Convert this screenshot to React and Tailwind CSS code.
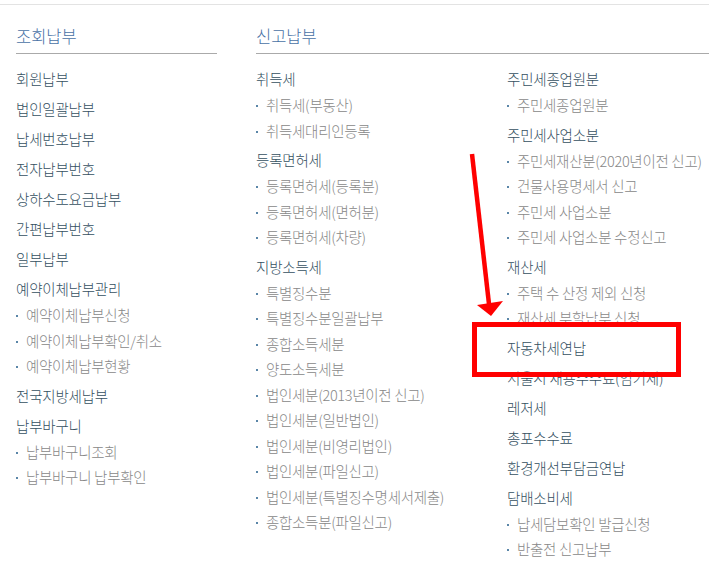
import React from "react";

const col1 = [
  { h: "회원납부" },
  { h: "법인일괄납부" },
  { h: "납세번호납부" },
  { h: "전자납부번호" },
  { h: "상하수도요금납부" },
  { h: "간편납부번호" },
  { h: "일부납부" },
  { h: "예약이체납부관리", s: ["예약이체납부신청", "예약이체납부확인/취소", "예약이체납부현황"] },
  { h: "전국지방세납부" },
  { h: "납부바구니", s: ["납부바구니조회", "납부바구니 납부확인"] },
];

const col2 = [
  { h: "취득세", s: ["취득세(부동산)", "취득세대리인등록"] },
  { h: "등록면허세", s: ["등록면허세(등록분)", "등록면허세(면허분)", "등록면허세(차량)"] },
  {
    h: "지방소득세",
    s: [
      "특별징수분",
      "특별징수분일괄납부",
      "종합소득세분",
      "양도소득세분",
      "법인세분(2013년이전 신고)",
      "법인세분(일반법인)",
      "법인세분(비영리법인)",
      "법인세분(파일신고)",
      "법인세분(특별징수명세서제출)",
      "종합소득분(파일신고)",
    ],
  },
];

const col3 = [
  { h: "주민세종업원분", s: ["주민세종업원분"] },
  {
    h: "주민세사업소분",
    s: ["주민세재산분(2020년이전 신고)", "건물사용명세서 신고", "주민세 사업소분", "주민세 사업소분 수정신고"],
  },
  { h: "재산세", s: ["주택 수 산정 제외 신청", "재산세 부할납부 신청"] },
  { h: "자동차세연납" },
  { h: "서울시 채용수수료(임기제)" },
  { h: "레저세" },
  { h: "총포수수료" },
  { h: "환경개선부담금연납" },
  { h: "담배소비세", s: ["납세담보확인 발급신청", "반출전 신고납부"] },
];

function Group({ g }) {
  return (
    <div>
      <div className="mt-[4px] leading-[26px] text-[14.5px] font-light tracking-[-0.2px] text-[#34505f] whitespace-nowrap">
        {g.h}
      </div>
      {g.s &&
        g.s.map((t) => (
          <div
            key={t}
            className="flex items-center leading-[25.5px] text-[14.5px] font-light tracking-[-0.3px] text-[#888888] whitespace-nowrap"
          >
            <span className="w-[2px] h-[2px] bg-[#5a86a8] mt-[3px] mr-[8px]" />
            <span>{t}</span>
          </div>
        ))}
    </div>
  );
}

function List({ groups }) {
  return (
    <div className="pt-[8px]">
      {groups.map((g) => (
        <Group key={g.h} g={g} />
      ))}
    </div>
  );
}

function Header({ children }) {
  return (
    <div className="pt-[19px] pb-[5px] border-b border-[#aaaaaa] leading-[24px] text-[16.5px] font-light text-[#4a72a6]">
      {children}
    </div>
  );
}

export default function App() {
  return (
    <div
      className="relative w-[709px] h-[565px] bg-white overflow-hidden"
      style={{ fontFamily: '"Noto Sans CJK KR", "Noto Sans", sans-serif' }}
    >
      <div className="mt-[4px] border-t border-[#e3e3e3] flex">
        <div className="ml-[16px] w-[201px]">
          <Header>조회납부</Header>
          <List groups={col1} />
        </div>
        <div className="ml-[39px] flex-1">
          <Header>신고납부</Header>
          <div className="flex">
            <div className="w-[251px]">
              <List groups={col2} />
            </div>
            <div className="flex-1">
              <List groups={col3} />
            </div>
          </div>
        </div>
      </div>

      <div className="absolute left-[472px] top-[322px] w-[209px] h-[55px] border-[5px] border-[#ff0000]" />
      <svg className="absolute left-0 top-0 pointer-events-none" width="709" height="565">
        <line x1="472" y1="154" x2="489" y2="304" stroke="#ff0000" strokeWidth="4.5" />
        <polygon points="477,305 503,301 491,316" fill="#ff0000" />
      </svg>
    </div>
  );
}
